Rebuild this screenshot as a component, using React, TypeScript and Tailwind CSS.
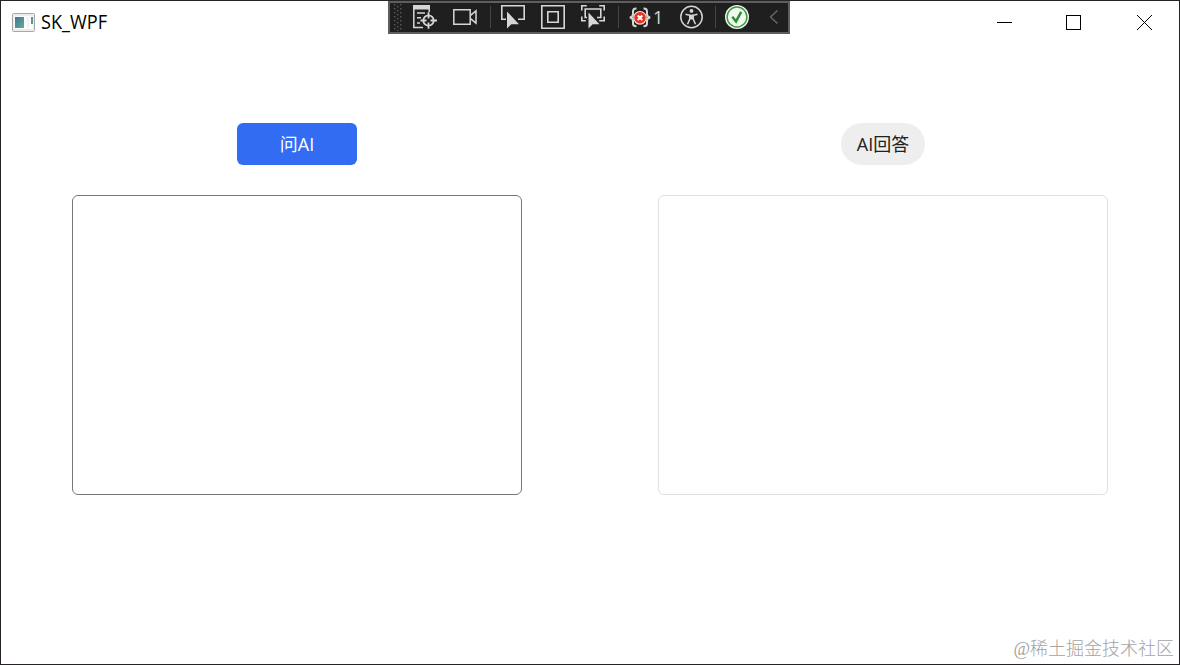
import React from 'react';

const stroke = '#d6d6d6';

function AppIcon() {
  return (
    <svg width="23" height="19" viewBox="0 0 23 19" className="shrink-0">
      <defs>
        <linearGradient id="screen" x1="0" y1="0" x2="1" y2="1">
          <stop offset="0" stopColor="#4372a0" />
          <stop offset="1" stopColor="#5fb08c" />
        </linearGradient>
      </defs>
      <rect x="0.5" y="0.5" width="22" height="18" rx="1" fill="#ececec" stroke="#a8a8a8" />
      <rect x="2" y="3" width="19" height="13" fill="#fbfbfb" />
      <rect x="3" y="4" width="9" height="11" fill="url(#screen)" />
      <rect x="15" y="4" width="2" height="11" fill="#eef2f1" />
      <rect x="19" y="4" width="2" height="7" fill="#5b9690" />
    </svg>
  );
}

function Grip() {
  return (
    <svg width="9" height="28" viewBox="0 0 9 28" fill="#5c5c5c">
      {[0, 1, 2, 3, 4, 5, 6].map(i => (
        <React.Fragment key={i}>
          <rect x="0" y={i * 4 + 1} width="1.4" height="1.4" />
          <rect x="6" y={i * 4 + 1} width="1.4" height="1.4" />
          <rect x="3" y={i * 4 + 3} width="1.4" height="1.4" />
        </React.Fragment>
      ))}
    </svg>
  );
}

function LiveTreeIcon() {
  return (
    <svg width="25" height="24" viewBox="0 0 25 24" fill="none" stroke={stroke} strokeWidth="1.5">
      <path d="M0 0h17v4.5H0z" fill={stroke} stroke="none" />
      <path d="M0.8 3v19.5H10M16.2 3v4M4 8h8M4 12.7h4M4 18h3" />
      <circle cx="15.5" cy="15.5" r="5.2" strokeWidth="1.8" />
      <path d="M15.5 7.2v6.3M15.5 17.5v6.3M7.5 15.5h6M17.5 15.5h6.5" strokeWidth="1.8" />
    </svg>
  );
}

function CameraIcon() {
  return (
    <svg width="24" height="24" viewBox="0 0 24 24" fill="none" stroke={stroke} strokeWidth="1.5">
      <path d="M0.8 4.8h16.4v14.4H0.8z" />
      <path d="M17.5 10.3l5.5-4.5v12.4l-5.5-4.5" />
    </svg>
  );
}

function SelectIcon() {
  return (
    <svg width="24" height="24" viewBox="0 0 24 24" fill="none" stroke={stroke} strokeWidth="1.6">
      <path d="M5 14.2H0.8V0.8h22.4v13.4H17" />
      <path d="M6 6.5v17l4.3-4.3H18z" fill={stroke} stroke="none" />
    </svg>
  );
}

function LayoutIcon() {
  return (
    <svg width="24" height="24" viewBox="0 0 24 24" fill="none" stroke={stroke} strokeWidth="1.6">
      <path d="M0.8 0.8h22.4v22.4H0.8z" />
      <path d="M6.8 6.8h10.4v10.4H6.8z" />
    </svg>
  );
}

function FocusIcon() {
  return (
    <svg width="24" height="24" viewBox="0 0 24 24" fill="none" stroke={stroke} strokeWidth="1.6">
      <path d="M0.8 5.5V0.8h5M18.2 0.8h5v4.7M0.8 11.5v4.2h4M23.2 11.5v4.2h-5" />
      <path d="M6 12.5H4.2V4h15.6v8.5H16" />
      <path d="M7.5 7.5v16l4.2-4.3h6.8z" fill={stroke} stroke="none" />
    </svg>
  );
}

function BindingErrorIcon() {
  return (
    <svg width="24" height="24" viewBox="0 0 24 24" fill="none">
      <g stroke={stroke} strokeWidth="2">
        <path d="M7.5 3.5H7Q4 3.5 4 6.5V9Q4 12 0.8 12.5Q4 13 4 16v2.5Q4 21.3 7 21.3h.5" />
        <path d="M14.5 3.5h.5Q18 3.5 18 6.5V9Q18 12 21.2 12.5Q18 13 18 16v2.5Q18 21.3 15 21.3h-.5" />
      </g>
      <circle cx="11" cy="12.8" r="6.3" fill="#e5311d" stroke="#f4e4e0" strokeWidth="1.1" />
      <path d="M8.7 10.5l4.6 4.6M13.3 10.5l-4.6 4.6" stroke="#fff" strokeWidth="2" />
    </svg>
  );
}

function AccessibilityIcon() {
  return (
    <svg width="24" height="24" viewBox="0 0 24 24" fill="none" stroke={stroke} strokeWidth="1.5">
      <circle cx="12.5" cy="12" r="10.7" />
      <circle cx="12.5" cy="5.9" r="1.9" fill={stroke} stroke="none" />
      <path d="M6.5 9.3l4.3 1v3.7l-2.3 5.3M18.5 9.3l-4.3 1v3.7l2.3 5.3" />
      <path d="M10.3 9.6h4.4v4.8h-4.4z" fill={stroke} stroke="none" />
    </svg>
  );
}

function HotReloadIcon() {
  return (
    <svg width="24" height="24" viewBox="0 0 24 24" fill="none">
      <circle cx="12" cy="12" r="12" fill="#f3f7f2" />
      <circle cx="12" cy="12" r="9.9" stroke="#3a9c3a" strokeWidth="1.5" />
      <path d="M7.3 11.8l3.7 4.6 5.2-9.6" stroke="#2c932c" strokeWidth="2.5" />
    </svg>
  );
}

function Separator({ className }: { className: string }) {
  return <div className={`h-[22px] w-px bg-[#464646] ${className}`} />;
}

function DebugToolbar() {
  return (
    <div className="flex h-[33px] w-[402px] shrink-0 items-center border-2 border-[#5e5e5e] bg-[#1f1f1f] pb-[2px] pl-[4px] [&>svg]:shrink-0">
      <Grip />
      <div className="ml-[10px] flex gap-[15px]">
        <LiveTreeIcon />
        <CameraIcon />
      </div>
      <Separator className="ml-[13px] mr-[10px]" />
      <div className="flex gap-4">
        <SelectIcon />
        <LayoutIcon />
        <FocusIcon />
      </div>
      <Separator className="ml-[13px] mr-[10px]" />
      <BindingErrorIcon />
      <span className="w-[26px] font-['Open_Sans',sans-serif] text-lg leading-none text-[#d6d6d6]">1</span>
      <AccessibilityIcon />
      <Separator className="ml-[12px] mr-[9px]" />
      <HotReloadIcon />
      <svg width="10" height="14" viewBox="0 0 10 14" fill="none" stroke="#686868" strokeWidth="1.4" className="ml-5">
        <path d="M8.5 0.5L1.5 7l7 6.5" />
      </svg>
    </div>
  );
}

function WindowControls() {
  return (
    <div className="ml-auto mr-[27px] flex h-[42px] items-center text-black">
      <svg width="16" height="16" viewBox="0 0 16 16" fill="none" stroke="currentColor" shapeRendering="crispEdges">
        <path d="M1 8.5h15" />
      </svg>
      <svg width="16" height="16" viewBox="0 0 16 16" fill="none" stroke="currentColor" shapeRendering="crispEdges" className="ml-[53px]">
        <path d="M1.5 1.5h14v14h-14z" />
      </svg>
      <svg width="16" height="16" viewBox="0 0 16 16" fill="none" stroke="currentColor" className="ml-[55px]">
        <path d="M1 1l15 15M16 1L1 16" />
      </svg>
    </div>
  );
}

export default function App() {
  return (
    <div className="flex h-[665px] w-[1180px] flex-col overflow-hidden border border-[#262326] bg-white font-['Open_Sans','Noto_Sans_CJK_SC',sans-serif]">
      {/* Title bar */}
      <header className="flex h-[44px] items-start">
        <div className="flex h-[42px] w-[387px] items-center gap-[6px] pl-[11px]">
          <AppIcon />
          <h1 className="origin-left scale-x-[0.93] text-[19.5px] leading-none text-black">SK_WPF</h1>
        </div>
        <DebugToolbar />
        <WindowControls />
      </header>

      {/* Question and answer panes */}
      <main className="mt-[78px] flex gap-[136px] pl-[71px]">
        <section className="flex w-[450px] flex-col items-center gap-[30px]">
          <button className="h-[42px] w-[120px] rounded-md bg-[#326cf3] text-lg leading-none text-white">问AI</button>
          <textarea className="block h-[300px] w-full resize-none rounded-md border border-[#777777] bg-white outline-none" />
        </section>
        <section className="flex w-[450px] flex-col items-center gap-[30px]">
          <div className="flex h-[42px] w-[84px] items-center justify-center rounded-full bg-[#eeeeee] text-lg leading-none text-[#212121]">
            AI回答
          </div>
          <textarea readOnly className="block h-[300px] w-full resize-none rounded-md border border-[#e0e0e0] bg-white outline-none" />
        </section>
      </main>

      <footer className="mt-auto pb-[4px] pr-[5px] text-right font-['Liberation_Serif','Noto_Sans_CJK_SC',serif] text-lg font-light leading-[22px] text-[#a3a3a3]">
        @稀土掘金技术社区
      </footer>
    </div>
  );
}
